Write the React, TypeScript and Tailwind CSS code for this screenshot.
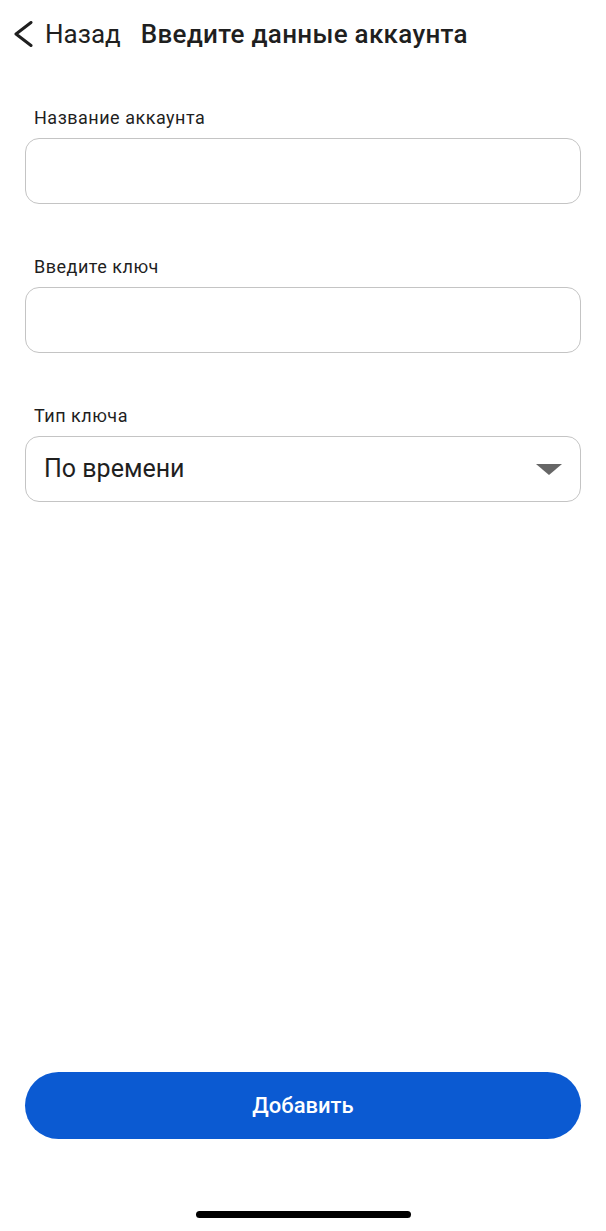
function Field({ label, children }: { label: string; children?: React.ReactNode }) {
    return (
        <div className="flex flex-col">
            <label className="pl-[9px] text-[18px] leading-[20px] tracking-[0.5px] text-[#1f1f1f]">{label}</label>
            <div className="mt-[10px] flex h-[66px] items-center rounded-[14px] border-[1.5px] border-[#c4c4c4] bg-white px-[18px]">
                {children}
            </div>
        </div>
    );
}

export default function App() {
    return (
        <div
            className="flex h-[1231px] w-[606px] flex-col bg-white text-[#1f1f1f]"
            style={{ fontFamily: "Roboto, 'Noto Sans', sans-serif" }}
        >
            {/* Header */}
            <div className="flex h-[68px] items-center pl-[13px]">
                <svg width="20" height="26" viewBox="0 0 20 26" fill="none">
                    <path d="M18 1.5 L3 13 L18 24.5" stroke="#1f1f1f" strokeWidth="3" strokeLinecap="round" strokeLinejoin="round" />
                </svg>
                <span className="ml-[12px] text-[26px]">Назад</span>
                <span className="ml-[20px] text-[26px] font-medium tracking-[0.3px]">Введите данные аккаунта</span>
            </div>

            {/* Form */}
            <div className="mt-[40px] flex flex-col gap-[53px] px-[25px]">
                <Field label="Название аккаунта" />
                <Field label="Введите ключ" />
                <Field label="Тип ключа">
                    <span className="flex-1 text-[25px]">По времени</span>
                    <svg width="26" height="11" viewBox="0 0 26 11">
                        <path d="M0 0 L26 0 L13 11 Z" fill="#666666" />
                    </svg>
                </Field>
            </div>

            <div className="flex-1" />

            {/* Button */}
            <div className="px-[25px]">
                <button className="flex h-[67px] w-full items-center justify-center rounded-full bg-[#0b5ad2] text-[22px] font-medium text-white">
                    Добавить
                </button>
            </div>

            {/* Home indicator */}
            <div className="flex h-[92px] items-end justify-center pb-[13px]">
                <div className="h-[7px] w-[215px] rounded-full bg-black" />
            </div>
        </div>
    );
}
